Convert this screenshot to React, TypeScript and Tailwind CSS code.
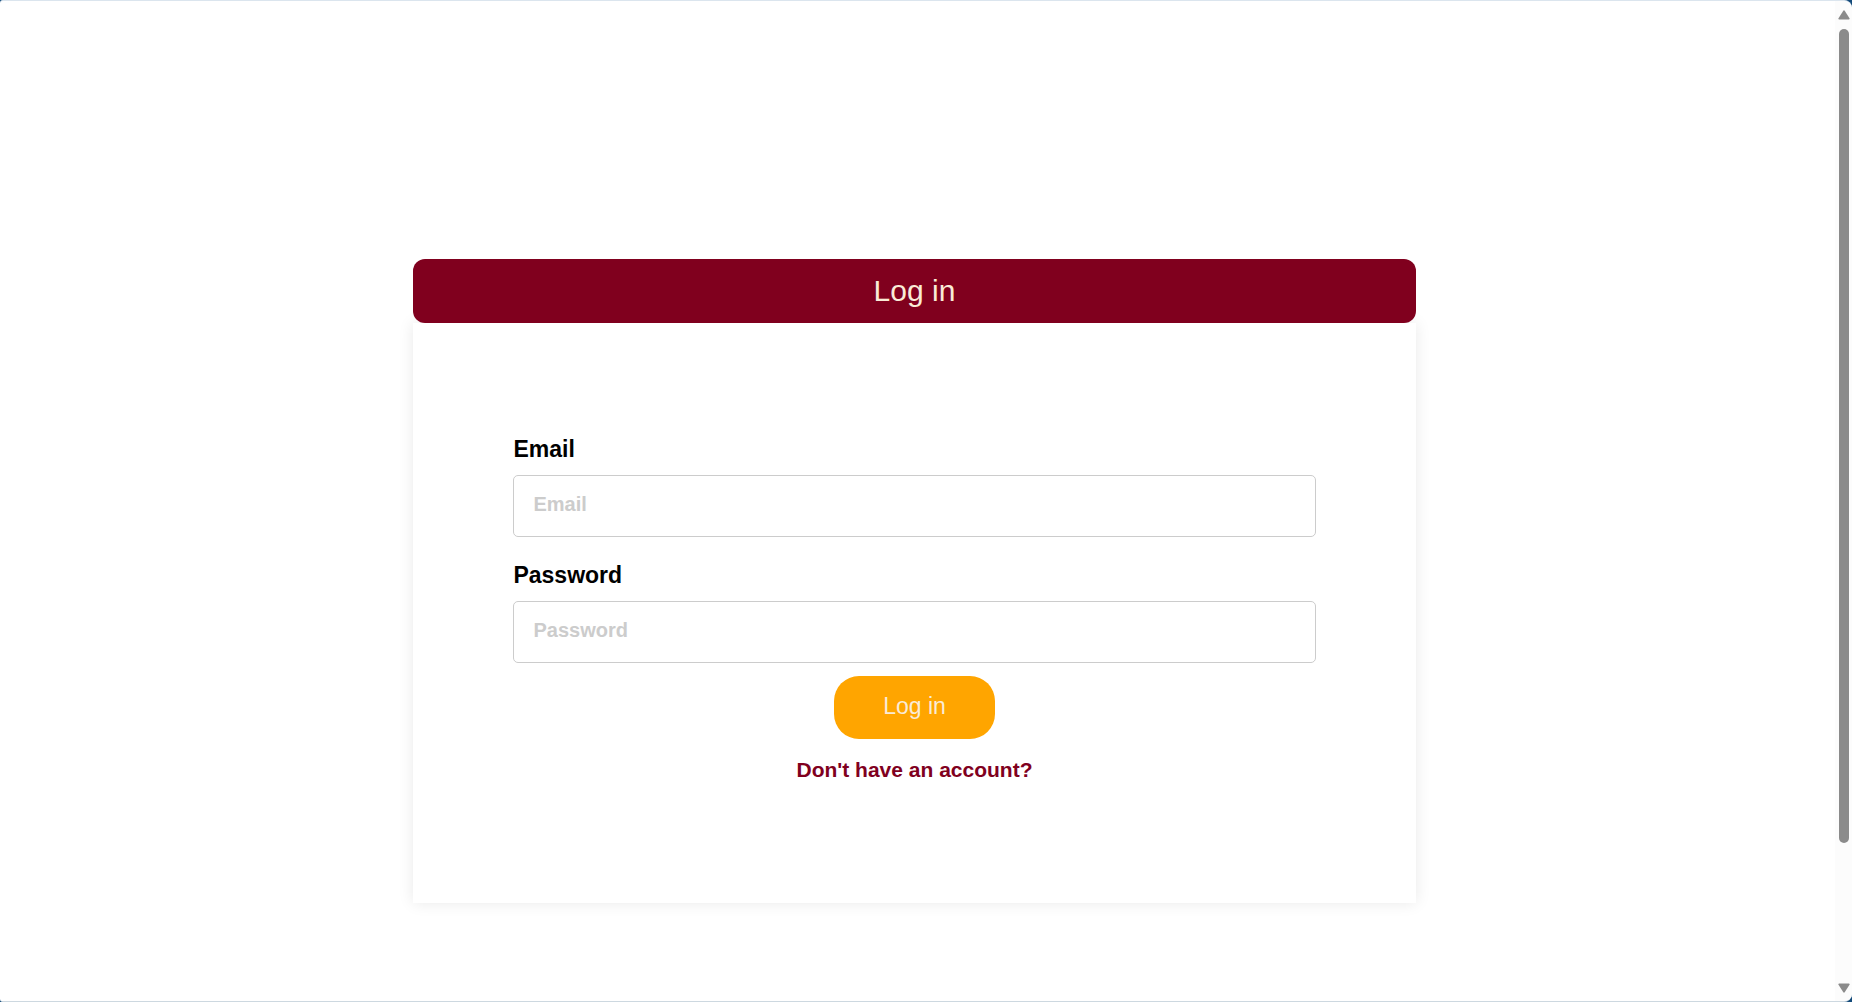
import React from 'react';

type FieldProps = { id: string; label: string; type: string };

function Field({ id, label, type }: FieldProps) {
  return (
    <div className="flex flex-col gap-3.5">
      <label htmlFor={id} className="text-[23px] leading-6 font-bold text-black">
        {label}
      </label>
      <input
        id={id}
        type={type}
        placeholder={label}
        className="h-[62px] w-full rounded-[5px] border border-[#cccccc] bg-white px-[19px] pb-[3px] text-xl font-bold text-black outline-none placeholder:text-[#cccccc]"
      />
    </div>
  );
}

function ScrollBar() {
  return (
    <div aria-hidden="true" className="flex w-[17px] shrink-0 flex-col items-center bg-[#fcfcfc] pt-[9px] pb-2 pl-px">
      <svg width="12" height="10" viewBox="0 0 12 10" fill="#8b8b8b" className="mb-[9px] shrink-0">
        <path d="M5.3.7a.9.9 0 0 1 1.4 0l4.8 7.6c.4.7 0 1.2-.8 1.2H1.3c-.8 0-1.2-.5-.8-1.2Z" />
      </svg>
      <div className="min-h-0 w-full flex-1 px-[3px]">
        <div className="h-[85.3%] rounded-full bg-[#8b8b8b]" />
      </div>
      <svg width="12" height="10" viewBox="0 0 12 10" fill="#8b8b8b" className="shrink-0">
        <path d="M5.3 9.3a.9.9 0 0 0 1.4 0l4.8-7.6C11.9 1 11.5.5 10.7.5H1.3C.5.5.1 1 .5 1.7Z" />
      </svg>
    </div>
  );
}

export default function App() {
  return (
    <div className="h-screen bg-[#134a7a] font-['Liberation_Sans',Arial,sans-serif]">
      <div className="flex h-full overflow-hidden rounded-l-[3px] rounded-r-lg border-y border-t-[#dbe5ee] border-b-[#cdd8e0] bg-white">
        <main className="flex min-w-0 flex-1 items-start justify-center overflow-hidden pt-[258px] pr-[9px] pl-[3px]">
          <section className="w-[55%] bg-white">
            <h1 className="relative rounded-xl bg-[#80001e] py-3 text-center text-[30px] leading-10 text-[#faebd7]">Log in</h1>
            <form
              onSubmit={(event) => event.preventDefault()}
              className="flex flex-col items-center px-[10%] pt-[114px] pb-[119px] shadow-[0_0_15px_rgba(0,0,0,0.09)]"
            >
              <div className="flex w-full flex-col gap-[26px]">
                <Field id="email" label="Email" type="email" />
                <Field id="password" label="Password" type="password" />
              </div>
              <button
                type="submit"
                className="mt-[13px] rounded-[25px] bg-[#ffa500] px-[49px] pt-4 pb-[19px] text-[23px] leading-7 text-[#faebd7]"
              >
                Log in
              </button>
              <a href="#register" className="mt-[17px] text-[21px] leading-7 font-bold text-[#80001e]">
                Don't have an account?
              </a>
            </form>
          </section>
        </main>
        <ScrollBar />
      </div>
    </div>
  );
}
